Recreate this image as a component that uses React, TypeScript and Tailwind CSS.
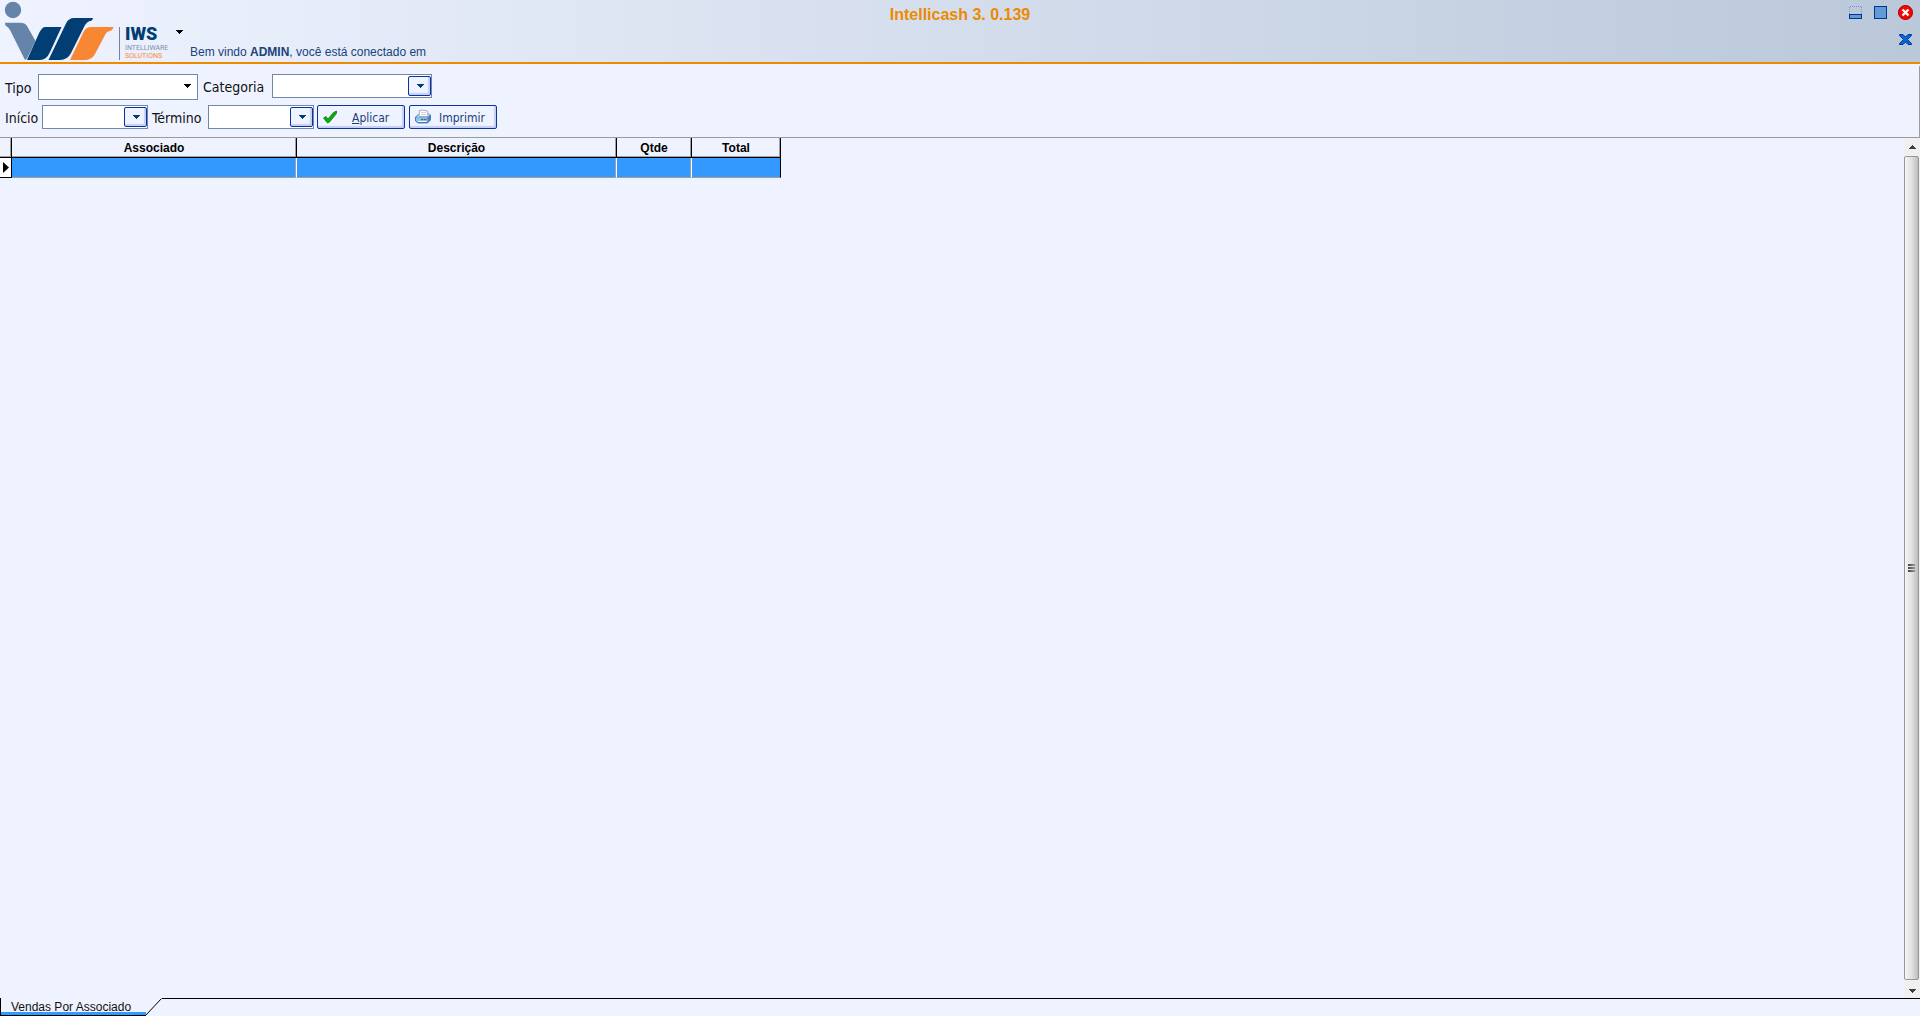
import React, { FC, ReactNode } from 'react';

interface IFieldProps {
    id: string;
    label: string;
    labelClass: string;
    className: string;
}

interface IToolButtonProps {
    icon: ReactNode;
    children: ReactNode;
    gap: string;
}

const columns = [
    { title: 'Associado', width: 'w-[285px]' },
    { title: 'Descrição', width: 'w-[320px]' },
    { title: 'Qtde', width: 'w-[75px]' },
    { title: 'Total', width: 'w-[89px]' },
];

const Logo: FC = () => (
    <div className="flex items-end">
        <svg className="h-[60px] w-[115px]" viewBox="0 0 115 60" aria-hidden="true">
            <circle cx="13" cy="10" r="8.200" fill="#6684aa" />
            <path d="M5 22.700H20Q25 22.700 27 26L35.500 41L27 58.500L25 60Q24 58 23 56L12 34Q9 27 6 26Q5 25 5 22.700Z" fill="#6684aa" />
            <path d="M45 27H61.500L50 52Q46.500 60 40 60H27L38 35.500Q41.500 27 45 27Z" fill="#003e73" />
            <path d="M74 18H93Q92.500 21 90 21Q86.500 22 84.500 26L71 53Q67.500 60 60 60H48.500L66 23.500Q68.500 18 74 18Z" fill="#003e73" />
            <path d="M91 27H113.500Q112.500 30.500 110 31Q106.500 31.500 105 35L95 54Q92 60 84 60H70L83.500 32Q86 27 91 27Z" fill="#f88734" />
        </svg>
        <div className="ml-1 flex h-[33px] w-12 flex-col justify-end border-l border-[#6684aa] pl-[5px] whitespace-nowrap font-['Roboto',sans-serif]">
            <span className="h-5 text-[18px] leading-5 font-black text-[#003e73]">IWS</span>
            <span className="h-2 text-[7px] leading-2 text-[#7890b1]">INTELLIWARE</span>
            <span className="h-2 text-[7px] leading-2 text-[#f88734]">SOLUTIONS</span>
        </div>
    </div>
);

const Caret: FC<{ className?: string }> = ({ className = '' }) => (
    <svg className={'h-1 w-[7px] ' + className} viewBox="0 0 7 4" shapeRendering="crispEdges" aria-hidden="true">
        <path d="M0 0H7V1H6V2H5V3H4V4H3V3H2V2H1V1H0Z" fill="currentColor" />
    </svg>
);

const DropField: FC<IFieldProps> = ({ id, label, labelClass, className }) => (
    <div className="flex items-center">
        <label htmlFor={id} className={'pt-0.5 ' + labelClass}>{label}</label>
        <div className={'flex h-6 border border-[#7088ae] bg-white py-px ' + className}>
            <input id={id} type="text" className="min-w-0 flex-1 px-1 text-sm outline-none" />
            <button
                type="button"
                aria-label={'Abrir ' + label}
                className="flex h-5 w-[23px] items-center justify-center rounded-xs border border-[#0a32a0] bg-[#eff3ff] pl-px text-[#003e73] shadow-[inset_-2px_-2px_1px_#c3cff5]"
            >
                <Caret />
            </button>
        </div>
    </div>
);

const ToolButton: FC<IToolButtonProps> = ({ icon, children, gap }) => (
    <button
        type="button"
        className={'flex h-6 w-[88px] items-center rounded-xs border border-[#0a32a0] bg-[#eff3ff] pl-[5px] text-[12px] text-[#1b3f78] shadow-[inset_-2px_-2px_1px_#c3cff5] ' + gap}
    >
        {icon}
        <span className="pt-0.5">{children}</span>
    </button>
);

const CheckIcon: FC = () => (
    <svg className="h-4 w-4" viewBox="0 0 16 16" aria-hidden="true">
        <path d="M.5 9L3 7.500L5 10L10.500 3.500L13.500 2V4.500L6.500 13L4.500 14Z" fill="#0aab0a" stroke="#078407" strokeWidth=".8" />
    </svg>
);

const PrinterIcon: FC = () => (
    <svg className="h-4 w-4" viewBox="0 0 16 16" aria-hidden="true">
        <path d="M.5 8L4 5H14L15.500 6V11L12.500 14H3L.5 12Z" fill="#3f86cc" stroke="#2b64a4" strokeWidth=".7" />
        <path d="M1 8.500H12L15 6L14 5H4Z" fill="#b9dcf5" />
        <path d="M4 7.500L4.500 1.500Q8 .5 12.500 2L13 7.500Z" fill="#fff" stroke="#8294a8" strokeWidth=".7" />
        <path d="M6 3.500H11M6 5.500H11.500" stroke="#b5c1ce" strokeWidth=".7" />
        <path d="M1 9H12.500V12L12 13H3L1 12Z" fill="#8ec5ee" />
        <path d="M3 12.500H11.500" stroke="#fff" />
        <path d="M6 10.500H8.500" stroke="#109838" strokeWidth="1.200" />
        <path d="M9 10.500H11.500" stroke="#e52b38" strokeWidth="1.200" />
    </svg>
);

const WindowButtons: FC = () => (
    <div className="flex flex-col items-end gap-3 pt-[5px] pr-[7px]">
        <div className="flex gap-[10px]">
            <button type="button" aria-label="Minimizar">
                <svg className="h-[15px] w-[15px]" viewBox="0 0 15 15" shapeRendering="crispEdges">
                    <path d="M1.500 9V1.500H13.500V9" fill="none" stroke="#629bd1" strokeDasharray="1 1" />
                    <rect x="1.500" y="9.500" width="12" height="4" fill="#629bd1" stroke="#0032a0" />
                </svg>
            </button>
            <button type="button" aria-label="Maximizar">
                <svg className="h-[15px] w-[15px]" viewBox="0 0 15 15" shapeRendering="crispEdges">
                    <rect x="1.500" y="1.500" width="12" height="12" fill="#629bd1" stroke="#0032a0" />
                </svg>
            </button>
            <button type="button" aria-label="Sair">
                <svg className="h-[15px] w-[15px]" viewBox="0 0 15 15">
                    <circle cx="7.500" cy="7.500" r="7" fill="#f00" stroke="#a00000" />
                    <path d="M4.500 4.500L10.500 10.500M10.500 4.500L4.500 10.500" stroke="#fff" strokeWidth="2.400" />
                </svg>
            </button>
        </div>
        <button type="button" aria-label="Fechar tela">
            <svg className="h-[15px] w-[15px]" viewBox="0 0 15 15">
                <path d="M1.500 2.500H5L7.500 5L10 2.500H13.500V3.500L9.500 7.500L13.500 11.500V12.500H10L7.500 10L5 12.500H1.500V11.500L5.500 7.500L1.500 3.500Z" fill="#0a64d0" stroke="#0038a0" />
            </svg>
        </button>
    </div>
);

const Header: FC = () => (
    <header className="grid h-16 shrink-0 grid-cols-[1fr_auto_1fr] border-b-2 border-[#ec8a00] bg-linear-to-r from-[#eff3ff] to-[#bac8da]">
        <div className="flex items-start">
            <Logo />
            <button type="button" aria-label="Menu" className="mt-[30px] ml-[9px] text-black">
                <Caret className="block w-[5px]" />
            </button>
            <p className="mt-11 ml-[7px] text-[12px] leading-4 text-[#1b4379]">
                Bem vindo <b>ADMIN</b>, você está conectado em
            </p>
        </div>
        <h1 className="pt-[5px] text-[16px] leading-5 font-bold text-[#ec8a00]">Intellicash 3. 0.139</h1>
        <WindowButtons />
    </header>
);

const Filters: FC = () => (
    <form className="mt-0.5 flex h-18 shrink-0 flex-col gap-[5px] border-r border-b border-[#9c9c9c] pt-2 pl-[5px] text-[14px] text-[#111] font-['DejaVu_Sans_Condensed','DejaVu_Sans',sans-serif]">
        <div className="flex h-[26px] items-start">
            <div className="flex items-center">
                <label htmlFor="tipo" className="w-[33px] pt-0.5">Tipo</label>
                <div className="relative">
                    <select id="tipo" className="block h-[26px] w-40 appearance-none border border-[#7088ae] bg-white px-1 text-sm outline-none">
                        <option></option>
                    </select>
                    <Caret className="pointer-events-none absolute top-[10px] right-[7px] text-black" />
                </div>
            </div>
            <div className="ml-[5px]">
                <DropField id="categoria" label="Categoria" labelClass="w-[69px]" className="w-40" />
            </div>
        </div>
        <div className="flex items-center">
            <DropField id="inicio" label="Início" labelClass="w-[37px]" className="w-[106px]" />
            <div className="ml-1">
                <DropField id="termino" label="Término" labelClass="w-14" className="w-[106px]" />
            </div>
            <div className="ml-[3px] flex gap-1">
                <ToolButton icon={<CheckIcon />} gap="gap-[13px]"><u>A</u>plicar</ToolButton>
                <ToolButton icon={<PrinterIcon />} gap="gap-2">Imprimir</ToolButton>
            </div>
        </div>
    </form>
);

const Grid: FC = () => (
    <table className="w-[781px] table-fixed border-separate border-spacing-0 text-[12px]">
        <thead>
            <tr className="h-5">
                <th className="w-3 border-r border-b border-black p-0 shadow-[inset_-1px_-1px_#a0a0a0]"></th>
                {columns.map(({ title, width }) => (
                    <th key={title} className={'border-r border-b border-black p-0 leading-4 font-bold shadow-[inset_-1px_-1px_#a0a0a0] ' + width}>
                        {title}
                    </th>
                ))}
            </tr>
        </thead>
        <tbody>
            <tr className="h-5">
                <td className="border-r border-b border-black bg-white p-0">
                    <svg className="ml-[3px] block h-[11px] w-[6px]" viewBox="0 0 6 11" aria-hidden="true">
                        <path d="M0 0L6 5.500L0 11Z" fill="#000" />
                    </svg>
                </td>
                {columns.map(({ title }) => (
                    <td key={title} className="border-r border-b border-r-white border-b-[#a0a0a0] bg-[#3399ff] bg-clip-padding p-0 shadow-[inset_-1px_0_#a0a0a0] last:border-r-black last:shadow-none"></td>
                ))}
            </tr>
        </tbody>
    </table>
);

const ScrollBar: FC = () => (
    <div className="flex w-4 shrink-0 flex-col bg-[#f0f0f0]">
        <button type="button" aria-label="Rolar para cima" className="flex h-[18px] items-center justify-center text-[#404040]">
            <Caret className="rotate-180" />
        </button>
        <div className="mr-px flex flex-1 flex-col items-center justify-center gap-px rounded-xs border border-[#979797] bg-linear-to-r from-[#f4f4f4] via-[#e2e2e2] to-[#bcbcbc]">
            <i className="h-0.5 w-[7px] bg-linear-to-r from-[#444] to-[#999]" />
            <i className="h-0.5 w-[7px] bg-linear-to-r from-[#444] to-[#999]" />
            <i className="h-0.5 w-[7px] bg-linear-to-r from-[#444] to-[#999]" />
        </div>
        <button type="button" aria-label="Rolar para baixo" className="flex h-[18px] items-center justify-center pt-1 text-[#404040]">
            <Caret />
        </button>
    </div>
);

const TabBar: FC = () => (
    <footer className="flex h-[18px] shrink-0">
        <button type="button" className="flex h-[18px] w-[146px] flex-col border-b border-l border-black text-left text-[12px] leading-[14px] text-[#111]">
            <span className="h-[14px] pt-0.5 pl-[10px]">Vendas Por Associado</span>
            <span className="h-[3px] w-full shrink-0 bg-[#3399ff]" />
        </button>
        <svg className="h-[18px] w-4 shrink-0" viewBox="0 0 16 18" aria-hidden="true">
            <path d="M0 17L15.500 .5" stroke="#000" fill="none" />
        </svg>
        <div className="flex-1 border-t border-black" />
    </footer>
);

const App: FC = () => (
    <div className="flex h-screen flex-col overflow-hidden bg-[#eff3ff] font-['Liberation_Sans',Arial,sans-serif] text-black">
        <Header />
        <Filters />
        <main className="flex min-h-0 flex-1">
            <div className="min-w-0 flex-1">
                <Grid />
            </div>
            <ScrollBar />
        </main>
        <TabBar />
    </div>
);

export default App;
